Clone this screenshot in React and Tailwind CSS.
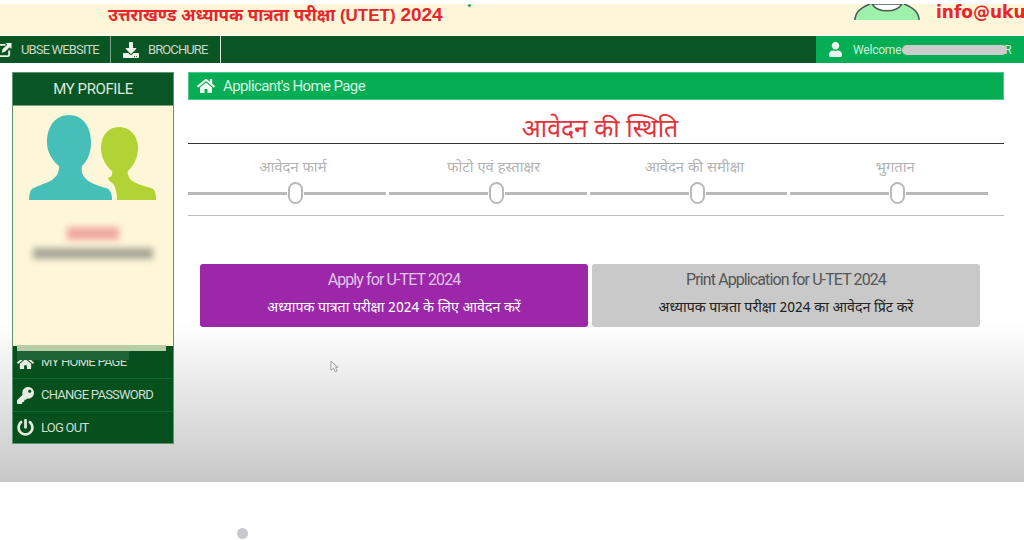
import { FaHome, FaKey, FaPowerOff, FaUser, FaDownload } from 'react-icons/fa'

const hindi = { fontFamily: '"Noto Sans Devanagari", "Noto Sans", "Liberation Sans", sans-serif' }
const title = { fontFamily: '"Liberation Sans", "Noto Sans Devanagari", "Noto Sans", sans-serif' }

const steps = ['आवेदन फार्म', 'फोटो एवं हस्ताक्षर', 'आवेदन की समीक्षा', 'भुगतान']

function PeopleIcon() {
  return (
    <svg viewBox="0 0 130 86" className="w-[130px] h-[86px]">
      <path fill="#b2d335" d="M91 12C80 12 73 21 73 33C73 43 78 51 84 56C85 60 83 62 80 63C80 66 84 67 86 70C88 74 89 79 89 85L128 85C128 78 127 74 123 73C115 71 106 68 102 64C100 60 99 57 100 56C106 50 110 42 110 33C110 21 102 12 91 12Z" />
      <path fill="#45bfb7" d="M41 0C28 0 19 11 19 27C19 37 24 45 31 51C31 58 29 61 24 65C17 69 8 71 4 74C2 76 1 80 1 85L84 85C84 78 82 74 78 73C70 71 62 68 58 64C54 60 53 56 54 51C60 45 63 37 63 27C63 11 54 0 41 0Z" />
    </svg>
  )
}

function ShareIcon() {
  return (
    <svg viewBox="0 0 16 16" className="w-[15px] h-[15px] shrink-0 ml-[-3px]">
      <path d="M9 3H2.5A1.5 1.5 0 0 0 1 4.5v9A1.5 1.5 0 0 0 2.5 15h9a1.5 1.5 0 0 0 1.5-1.5V9" fill="none" stroke="#eef2e8" strokeWidth="2" />
      <path d="M5 11.5 6 7.5 11 3 9 1h6.5v6.5L13.5 5.5 8.5 10.5Z" fill="#eef2e8" />
    </svg>
  )
}

function AvatarTop() {
  return (
    <svg viewBox="0 0 66 16" className="absolute left-[854px] top-0 w-[66px] h-[16px]">
      <path d="M1 16C1 8 8 3 16 0L50 0C58 3 65 8 65 16Z" fill="#9ff0ad" />
      <path d="M1 16C1 8 8 3 16 0M50 0C58 3 65 8 65 16" fill="none" stroke="#4a5a55" strokeWidth="1.5" />
      <path d="M18 0C24 9 42 9 48 0Z" fill="#ffffff" stroke="#4a5a55" strokeWidth="1.5" />
    </svg>
  )
}

function MenuRow({ icon, label, className }) {
  return (
    <div className={`flex items-center gap-[7px] pl-[4px] text-[13px] text-[#d4dcd0] ${className}`}>
      <span className="text-[17px] text-[#e8ebe0] w-[17px]">{icon}</span>
      <span className="tracking-[-0.75px]">{label}</span>
    </div>
  )
}

export default function App() {
  return (
    <div className="relative w-[1024px] h-[540px] overflow-hidden bg-white font-['Roboto',sans-serif]">
      {/* top banner, cut off by the video frame */}
      <div className="mt-[4px] h-[31px] bg-[#fdf6d8] flex overflow-hidden relative">
        <div className="ml-[108px] mt-[-1px] text-[#e8252b] font-bold text-[17px] leading-[24px] whitespace-nowrap" style={title}>
          उत्तराखण्ड अध्यापक पात्रता परीक्षा (UTET) <span className="text-[19px]">2024</span>
        </div>
        <div className="absolute left-[468px] top-0 w-[3px] h-[3px] bg-[#3aa86a] rotate-45"></div>
        <AvatarTop />
        <div className="absolute left-[936px] top-[-4px] text-[#e8252b] font-bold text-[17px] font-['DejaVu_Sans',sans-serif] leading-[24px] whitespace-nowrap">info@uku</div>
      </div>

      {/* nav bar */}
      <div className="h-[27px] mt-[1px] bg-[#0a5524] flex text-[13px] text-[#c9d8c8]">
        <div className="w-[111px] border-r border-[#7ea287] flex items-center gap-[9px] overflow-hidden">
          <ShareIcon />
          <span className="tracking-[-0.85px]">UBSE WEBSITE</span>
        </div>
        <div className="w-[110px] border-r border-[#dfe8dc] flex items-center gap-[9px] pl-[12px]">
          <FaDownload className="text-[#eef2e8] text-[16px] shrink-0" />
          <span className="tracking-[-0.9px]">BROCHURE</span>
        </div>
        <div className="flex-1"></div>
        <div className="w-[208px] bg-[#05ae55] flex items-center pl-[12px] relative text-[12px]">
          <FaUser className="text-[#eef6ee] text-[15px]" />
          <span className="ml-[10px] tracking-[-0.2px] text-[#cfeeda]">Welcome</span>
          <span className="ml-[103px] text-[#cfeeda]">R</span>
          <div className="absolute left-[86px] top-[9px] w-[105px] h-[10px] rounded-full bg-[#cccccc]"></div>
        </div>
      </div>

      {/* main area */}
      <div className="h-[419px] bg-gradient-to-b from-white from-[62%] to-[#c8c8c8] flex pt-[9px] pl-[12px] gap-[14px]">
        <aside className="relative w-[162px] h-[372px] border border-[#5c9670] flex flex-col">
          <div className="h-[32px] shrink-0 bg-[#0a5524] text-[#dfe8dc] text-[15px] flex items-center justify-center tracking-[-0.4px]">MY PROFILE</div>
          <div className="h-[241px] shrink-0 bg-[#fdf6d8] flex flex-col items-center border-t border-[#7ea287]">
            <div className="self-start mt-[9px] ml-[15px]"><PeopleIcon /></div>
            <div className="mt-[26px] w-[52px] h-[13px] bg-[#f2a9a0] blur-[3px]"></div>
            <div className="mt-[8px] w-[120px] h-[11px] bg-[#a8a698] blur-[3px]"></div>
          </div>
          <div className="flex-1 bg-[#06501e]">
            <MenuRow icon={<FaHome />} label="MY HOME PAGE" className="h-[33px] border-b border-[#0d6a2a]" />
            <MenuRow icon={<FaKey />} label="CHANGE PASSWORD" className="h-[33px] border-b border-[#0d6a2a]" />
            <MenuRow icon={<FaPowerOff />} label="LOG OUT" className="h-[31px]" />
          </div>
          {/* smudge over the first menu row */}
          <div className="absolute left-[4px] top-[272px] w-[149px] h-[6px] bg-[#b8cda5]"></div>
          <div className="absolute left-[4px] top-[278px] w-[112px] h-[9px] bg-[#1f6436]"></div>
        </aside>

        <main className="w-[816px]">
          <div className="h-[28px] bg-[#05ae55] border border-[#4cc888] flex items-center pl-[8px] gap-[8px] text-[#d9f3e2] text-[15px]">
            <FaHome className="text-[18px] text-[#f0f8f0]" />
            <span className="tracking-[-0.6px]">Applicant's Home Page</span>
          </div>

          <h1 className="h-[44px] pt-[15px] pl-[8px] text-center text-[24.8px] leading-[32px] text-[#e2323a] border-b border-[#333333]" style={hindi}>आवेदन की स्थिति</h1>

          <div className="grid grid-cols-4 gap-[3px] h-[72px] border-b border-[#bbbbbb] pt-[14px] pr-[16px]">
            {steps.map((s) => (
              <div key={s} className="flex flex-col">
                <div className="h-[22px] ml-[12px] text-center text-[14.8px] leading-[22px] text-[#b3b3b3] whitespace-nowrap" style={hindi}>{s}</div>
                <div className="flex items-center mt-[2px]">
                  <div className="w-[99px] h-[3px] bg-[#b9b9b9]"></div>
                  <div className="w-[15px] h-[22px] mx-[1px] rounded-full border-2 border-[#b9b9b9] bg-white"></div>
                  <div className="flex-1 h-[3px] bg-[#b9b9b9]"></div>
                </div>
              </div>
            ))}
          </div>

          <div className="flex gap-[4px] mt-[48px] ml-[12px]">
            <div className="w-[388px] h-[63px] rounded-[3px] bg-[#9c27a8] text-center flex flex-col items-center pt-[6px]">
              <div className="text-[16px] leading-[20px] text-[#e0c4e6] tracking-[-0.9px]">Apply for U-TET 2024</div>
              <div className="mt-[8px] text-[14.2px] leading-[22px] text-white" style={hindi}>अध्यापक पात्रता परीक्षा 2024 के लिए आवेदन करें</div>
            </div>
            <div className="w-[388px] h-[63px] rounded-[3px] bg-[#c9c9c9] text-center flex flex-col items-center pt-[6px]">
              <div className="text-[16px] leading-[20px] text-[#555555] tracking-[-0.9px]">Print Application for U-TET 2024</div>
              <div className="mt-[8px] text-[14.2px] leading-[22px] text-[#222222]" style={hindi}>अध्यापक पात्रता परीक्षा 2024 का आवेदन प्रिंट करें</div>
            </div>
          </div>
        </main>
      </div>

      {/* mouse pointer and the video's dot */}
      <svg viewBox="0 0 10 14" className="absolute left-[330px] top-[360px] w-[9px] h-[13px]">
        <path d="M1 1v10l3-2 2 4 2-1-2-4h3z" fill="#f2f2f2" stroke="#9a9a9a" strokeWidth="1" />
      </svg>
      <div className="absolute left-[237px] top-[528px] w-[11px] h-[11px] rounded-full bg-[#c9c9cd]"></div>
    </div>
  )
}
